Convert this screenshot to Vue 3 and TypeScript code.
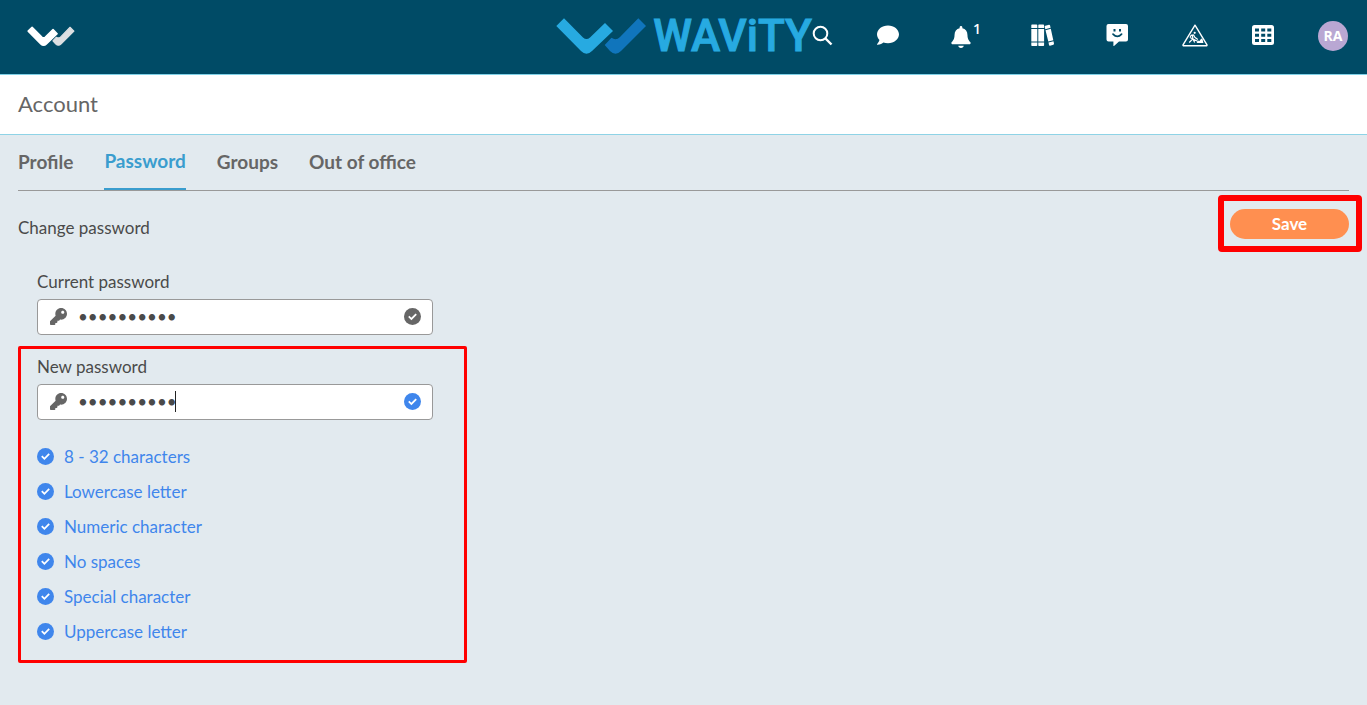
<script setup lang="ts">
import { ref } from 'vue'

const tabs = ['Profile', 'Password', 'Groups', 'Out of office']
const activeTab = ref('Password')
const currentPassword = ref('Abcdef12!x')
const newPassword = ref('Ghijkl34!y')
const rules = [
  '8 - 32 characters',
  'Lowercase letter',
  'Numeric character',
  'No spaces',
  'Special character',
  'Uppercase letter',
]

const keyPath =
  'M512 176.001C512 273.203 433.202 352 336 352c-11.22 0-22.19-1.062-32.827-3.069l-24.012 27.014A23.999 23.999 0 0 1 261.223 384H224v40c0 13.255-10.745 24-24 24h-40v40c0 13.255-10.745 24-24 24H24c-13.255 0-24-10.745-24-24v-78.059c0-6.365 2.529-12.47 7.029-16.971l161.802-161.802C163.108 213.814 160 195.271 160 176 160 78.798 238.797.001 335.999 0 433.488-.001 512 78.511 512 176.001zM336 128c0 26.51 21.49 48 48 48s48-21.49 48-48-21.49-48-48-48-48 21.49-48 48z'
const logoLeft = 'M8 .3L.3 8L25 33Q30.5 38.5 36 33L57 13L49 5L34 19.5Q30.5 22.5 27 19.5Z'
const logoRight = 'M82.3 .3L90 8L65 33Q59.5 38.5 54 33L48.7 27L55.5 19.8Q60 23 64 19Z'
</script>

<template>
  <div class="page">
    <header class="topbar">
      <a class="home" href="#" aria-label="Home">
        <svg width="48" height="21" viewBox="-2 -2 94 41">
          <path :d="logoRight" fill="#dcdfe2" stroke="#dcdfe2" stroke-width="2" stroke-linejoin="round" />
          <path :d="logoLeft" fill="#fff" stroke="#fff" stroke-width="3" stroke-linejoin="round" />
        </svg>
      </a>
      <div class="brand">
        <svg width="91" height="37" viewBox="0 0 91 37">
          <path :d="logoRight" fill="#1075bc" />
          <path :d="logoLeft" fill="#27aae1" />
        </svg>
        <span class="brand-name">WAViTY</span>
      </div>
      <nav class="tools" aria-label="Tools">
        <button type="button" aria-label="Search">
          <svg width="21" height="21" viewBox="0 0 21 21" fill="none" stroke="#fff">
            <circle cx="8.500" cy="8.500" r="6.800" stroke-width="2" />
            <path d="M13.500 13.500L19.500 19.500" stroke-width="2.400" />
          </svg>
        </button>
        <button type="button" class="tight" aria-label="Chat">
          <svg width="22" height="22" viewBox="0 0 512 512" fill="#fff">
            <path d="M256 32C114.600 32 0 125.100 0 240c0 49.600 21.400 95 57 130.700C44.500 421.100 2.700 466 2.200 466.500c-2.200 2.300-2.800 5.700-1.500 8.700S4.800 480 8 480c66.300 0 116-31.800 140.600-51.400 32.700 12.300 69 19.400 107.400 19.400 141.400 0 256-93.100 256-208S397.400 32 256 32z" />
          </svg>
        </button>
        <button type="button" class="bell" aria-label="Notifications">
          <svg width="20" height="22" viewBox="0 0 448 512" fill="#fff">
            <path d="M224 512c35.320 0 63.970-24 63.970-50H160.030c0 26 28.650 50 63.970 50zM439.390 372c-19.320-20.760-65-61.700-65-164 0-77.700-44.950-139.900-118.410-155.160V32c0-17.670-14.320-32-31.980-32s-31.980 14.330-31.980 32v20.840C118.560 68.100 73.600 130.300 73.600 208c0 102.300-45.700 143.240-65 164-6 6.450-8.660 14.160-8.610 21.710.110 16.400 12.980 32 32.100 32h383.800c19.120 0 32-15.600 32.100-32 .050-7.550-2.610-15.270-8.610-21.710z" />
          </svg>
          <span class="count">1</span>
        </button>
        <button type="button" aria-label="Library">
          <svg width="23" height="23" viewBox="0 0 23 23" fill="#fff">
            <path d="M1 .5h4.500q.8 0 .8.800V4H.3V1.300Q.3.500 1 .5zM.3 5h6v12.500h-6zM.3 18.500h6v2.700q0 .8-.8.800H1q-.7 0-.7-.8z" />
            <path d="M8 .5h4.300q.8 0 .8.800V4H7.300V1.300Q7.300.500 8 .5zM7.300 5h5.800v12.500H7.300zM7.300 18.500h5.800v2.700q0 .8-.8.800H8q-.7 0-.7-.8z" />
            <path d="M14.300 1.700L18 .7q.8-.1 1 .6l.6 2.500-5.300 1.400-.6-2.500q-.1-.8.600-1zM14.500 6.200l5.300-1.400 2.500 11.400-5 1.300zM17.500 18.500l5-1.300.5 2.600q.1.700-.6.900l-3.400 1q-.8.100-1-.6z" />
          </svg>
        </button>
        <button type="button" aria-label="Feedback">
          <svg width="24" height="22" viewBox="0 0 24 22">
            <path d="M2.500 0h17.500q2 0 2 2v13.500q0 2-2 2h-7L8 22q-.6.300-.6-.4v-4.100H2.500q-2 0-2-2V2q0-2 2-2z" fill="#fff" />
            <path d="M7.500 5h2v2.600h-2zM13 5h2v2.600h-2z" fill="#004b66" />
            <path d="M7 10.200q4.300 4.500 8.600 0" fill="none" stroke="#004b66" stroke-width="1.700" stroke-linecap="round" />
          </svg>
        </button>
        <button type="button" aria-label="Work in progress">
          <svg width="26" height="23" viewBox="0 0 26 23" fill="none" stroke="#fff" stroke-linejoin="round">
            <path d="M13 1.200L1 20.800q-.2 1 .8 1h22.400q1 0 .8-1z" stroke-width="1.400" />
            <circle cx="12.700" cy="8.800" r="1.100" fill="#fff" stroke="none" />
            <path d="M11.500 10.800L9 11.400l-1 2M11.500 10.800l1.300 2.400 3 2.300M10.400 11.500l.5 3.300-3.700 3.700M10.700 14.800l2 3.700M8 13.500l8 4" stroke-width="1.200" />
            <path d="M14.500 18.900l2-2.300 1 .3 1.700-2.400 1.400.8.800 3.600z" fill="#fff" stroke="none" />
          </svg>
        </button>
        <button type="button" class="tight" aria-label="Apps">
          <svg width="22" height="20" viewBox="0 0 22 20">
            <rect width="22" height="20" rx="2.500" fill="#fff" />
            <path d="M3 3.500h4v3H3zM9.200 3.500h4v3h-4zM15.300 3.500h4v3h-4zM3 8.700h4v3H3zM9.200 8.700h4v3h-4zM15.300 8.700h4v3h-4zM3 14h4v3H3zM9.200 14h4v3h-4zM15.300 14h4v3h-4z" fill="#004b66" />
          </svg>
        </button>
        <button type="button" class="tight avatar">RA</button>
      </nav>
    </header>

    <div class="titlebar"><h1>Account</h1></div>

    <main>
      <nav class="tabs" aria-label="Account sections">
        <a
          v-for="tab in tabs"
          :key="tab"
          href="#"
          :class="{ active: tab === activeTab }"
          @click.prevent="activeTab = tab"
        >{{ tab }}</a>
      </nav>

      <form @submit.prevent>
        <div class="heading">
          <h2>Change password</h2>
          <div class="save-frame"><button type="submit" class="save">Save</button></div>
        </div>

        <div class="current">
          <label for="current-password">Current password</label>
          <div class="field">
            <svg class="key" width="17" height="17" viewBox="0 0 512 512"><path :d="keyPath" /></svg>
            <input id="current-password" v-model="currentPassword" type="password" />
            <svg class="tick grey" width="17" height="17" viewBox="0 0 17 17">
              <circle cx="8.500" cy="8.500" r="8.500" />
              <path d="M4.800 8.300l2.600 2.700 4.800-4.900" />
            </svg>
          </div>
        </div>

        <section class="new">
          <label for="new-password">New password</label>
          <div class="field">
            <svg class="key" width="17" height="17" viewBox="0 0 512 512"><path :d="keyPath" /></svg>
            <input id="new-password" v-model="newPassword" type="password" />
            <span class="caret"></span>
            <svg class="tick" width="17" height="17" viewBox="0 0 17 17">
              <circle cx="8.500" cy="8.500" r="8.500" />
              <path d="M4.800 8.300l2.600 2.700 4.800-4.900" />
            </svg>
          </div>
          <ul>
            <li v-for="rule in rules" :key="rule">
              <svg class="tick" width="17" height="17" viewBox="0 0 17 17">
                <circle cx="8.500" cy="8.500" r="8.500" />
                <path d="M4.800 8.100l2.600 2.700 4.800-4.900" />
              </svg>
              {{ rule }}
            </li>
          </ul>
        </section>
      </form>
    </main>
  </div>
</template>

<style>
body {
  background: #e2eaef;
}
</style>

<style scoped>
.page {
  font-family: Lato, sans-serif;
  font-size: 17px;
  line-height: 22px;
  color: #4a4a4a;
}
.page * {
  box-sizing: border-box;
}
button,
input {
  font: inherit;
  border: 0;
  padding: 0;
  background: none;
}
button {
  cursor: pointer;
}
svg {
  display: block;
  flex: none;
}
.topbar {
  display: grid;
  grid-template-columns: 1fr auto 1fr;
  align-items: center;
  height: 75px;
  padding: 0 19px 2px 27px;
  background: #004b66;
  border-bottom: 1px solid #7fd0e6;
}
.home {
  justify-self: start;
}
.brand {
  display: flex;
  align-items: center;
  gap: 6px;
}
.brand-name {
  font: 500 44px/48px Roboto, sans-serif;
  color: #27aae1;
  -webkit-text-stroke: 1px #27aae1;
}
.tools {
  display: flex;
  align-items: center;
  justify-content: flex-end;
  padding-bottom: 2px;
}
.tools button {
  margin-left: 52px;
}
.tools button:first-child {
  margin-left: 0;
}
.tools button.tight {
  margin-left: 44px;
}
.tools .bell {
  display: flex;
  align-items: flex-end;
  gap: 2px;
  width: 30px;
  height: 26px;
}
.tools .bell + button {
  margin-left: 50px;
}
.count {
  align-self: flex-start;
  font: 600 14px/14px "Open Sans", sans-serif;
  color: #fff;
}
.tools .avatar {
  width: 30px;
  height: 30px;
  margin-top: 2px;
  border-radius: 50%;
  background: #b9a7d3;
  color: #fff;
  font: 700 14px/28px "Open Sans", sans-serif;
}
.titlebar {
  padding: 14px 18px 15px;
  background: #fff;
  border-bottom: 1px solid #8ed3e6;
}
h1 {
  margin: 0;
  font-size: 22px;
  font-weight: 400;
  line-height: 30px;
  color: #666;
}
main {
  padding: 0 18px 41px;
}
.tabs {
  display: flex;
  gap: 31px;
  height: 56px;
  border-bottom: 1px solid #999;
}
.tabs a {
  height: 55px;
  line-height: 53px;
  font-size: 19px;
  font-weight: 700;
  color: #666;
  text-decoration: none;
}
.tabs a.active {
  line-height: 51px;
  color: #3a9dce;
  border-bottom: 2px solid #3a9dce;
}
.heading {
  display: flex;
  justify-content: space-between;
  align-items: flex-start;
  padding-top: 18px;
}
h2 {
  margin: 8px 0 0;
  font-size: 17px;
  line-height: 22px;
  font-weight: 400;
}
.save-frame {
  position: relative;
}
.save-frame::after {
  content: "";
  position: absolute;
  inset: -14px -13px -13px -12px;
  border: 6px solid #f00;
  border-radius: 4px;
  pointer-events: none;
}
.save {
  display: block;
  width: 119px;
  height: 30px;
  border-radius: 15px;
  background: #ff8f50;
  color: #fff;
  font-weight: 700;
}
.current {
  width: 415px;
  padding: 32px 0 11px 19px;
}
label {
  display: block;
  margin-bottom: 6px;
}
.field {
  position: relative;
  display: flex;
  align-items: center;
  height: 36px;
  padding: 0 11px 2px 12px;
  background: #fff;
  border: 1px solid #999;
  border-radius: 4px;
}
.key {
  fill: #666;
}
.field input {
  flex: 1;
  min-width: 0;
  height: 32px;
  padding-left: 11px;
  color: #4a4a4a;
  outline: 0;
}
.caret {
  position: absolute;
  left: 137px;
  top: 6px;
  width: 1px;
  height: 21px;
  background: #222;
}
.tick {
  fill: #3f86ec;
}
.tick path {
  fill: none;
  stroke: #fff;
  stroke-width: 1.8;
}
.tick.grey {
  fill: #666;
}
.new {
  width: 449px;
  padding: 7px 31px 11px 16px;
  border: 3px solid #f00;
  border-radius: 2px;
}
.new .field {
  width: 396px;
}
ul {
  margin: 19px 0 0;
  padding: 0;
  list-style: none;
}
li {
  display: flex;
  align-items: center;
  gap: 10px;
  height: 35px;
  color: #3f86ec;
}
</style>
